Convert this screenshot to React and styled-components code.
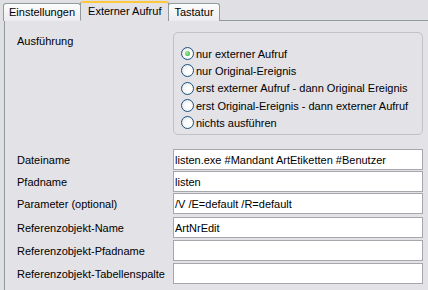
import React from 'react'
import styled, { createGlobalStyle } from 'styled-components'

const Global = createGlobalStyle`
  body {
    margin: 0;
    background: #e0dfe3;
    font-family: "Liberation Sans", Arial, sans-serif;
    font-size: 11px;
    color: #000;
    overflow: hidden;
  }
`

const Window = styled.div`
  width: 428px;
  height: 290px;
  overflow: hidden;
  background: #e0dfe3;
  padding-top: 1px;
  box-sizing: border-box;
`

const TabStrip = styled.div`
  display: flex;
  align-items: flex-end;
  padding-left: 3px;
  height: 20px;
  position: relative;
  z-index: 1;
`

const Tab = styled.div`
  height: ${p => (p.active ? '20px' : '18px')};
  padding: 0 ${p => (p.active ? '7px' : '5px')};
  margin: 0 ${p => (p.active ? '-1px' : '0')};
  box-sizing: border-box;
  border: 1px solid #919b9c;
  border-bottom: ${p => (p.active ? '1px solid #e3e2e7' : 'none')};
  border-top: ${p => (p.active ? '2px solid #ffc83c' : '1px solid #919b9c')};
  border-radius: 3px 3px 0 0;
  background: ${p => (p.active ? '#e3e2e7' : 'linear-gradient(#fdfdfd, #ecebef)')};
  display: flex;
  align-items: center;
  font-size: 11px;
  line-height: 1;
`

const Panel = styled.div`
  margin-left: 4px;
  margin-top: -1px;
  width: 440px;
  height: 280px;
  border-left: 1px solid #919b9c;
  border-top: 1px solid #919b9c;
  background: #e3e2e7;
  padding: 11px 0 0 12px;
  box-sizing: border-box;
  display: grid;
  grid-template-columns: 156px 250px;
  align-content: start;
  align-items: center;
`

const Label = styled.div`
  align-self: ${p => (p.top ? 'start' : 'center')};
  padding-top: ${p => (p.top ? '3px' : '0')};
  margin-top: ${p => p.gap || 0}px;
  font-size: 11px;
`

const Group = styled.div`
  border: 1px solid #c3c1c8;
  border-radius: 5px;
  height: 103px;
  box-sizing: border-box;
  padding: 12px 0 0 7px;
  display: flex;
  flex-direction: column;
`

const Option = styled.label`
  display: flex;
  align-items: center;
  height: 17.3px;
  gap: 2px;
  font-size: 11px;
`

const Radio = styled.span`
  width: 11px;
  height: 11px;
  border-radius: 50%;
  border: 1px solid #1c5180;
  background: radial-gradient(circle at 60% 60%, #ffffff 30%, #dcdcd7 100%);
  display: flex;
  align-items: center;
  justify-content: center;
  flex: none;
  &::after {
    content: '';
    width: 5px;
    height: 5px;
    border-radius: 50%;
    background: ${p => (p.checked ? 'radial-gradient(circle at 40% 40%, #a8f0a0, #21a121)' : 'transparent')};
  }
`

const Field = styled.div`
  height: 21px;
  margin-top: ${p => p.gap || 0}px;
  border: 1px solid #a6a6ad;
  background: #fff;
  box-sizing: border-box;
  padding-left: 1px;
  display: flex;
  align-items: center;
  font-size: 11px;
  white-space: nowrap;
`

const options = [
  'nur externer Aufruf',
  'nur Original-Ereignis',
  'erst externer Aufruf - dann Original Ereignis',
  'erst Original-Ereignis - dann externer Aufruf',
  'nichts ausführen',
]

const fields = [
  ['Dateiname', 'listen.exe #Mandant ArtEtiketten #Benutzer', 14],
  ['Pfadname', 'listen', 1],
  ['Parameter (optional)', '/V /E=default /R=default', 1],
  ['Referenzobjekt-Name', 'ArtNrEdit', 3],
  ['Referenzobjekt-Pfadname', '', 2],
  ['Referenzobjekt-Tabellenspalte', '', 2],
]

export default function App() {
  return (
    <Window>
      <Global />
      <TabStrip>
        <Tab>Einstellungen</Tab>
        <Tab active>Externer Aufruf</Tab>
        <Tab>Tastatur</Tab>
      </TabStrip>
      <Panel>
        <Label top>Ausführung</Label>
        <Group>
          {options.map((o, i) => (
            <Option key={o}>
              <Radio checked={i === 0} />
              {o}
            </Option>
          ))}
        </Group>
        {fields.map(([label, value, gap]) => (
          <React.Fragment key={label}>
            <Label gap={gap}>{label}</Label>
            <Field gap={gap}>{value}</Field>
          </React.Fragment>
        ))}
      </Panel>
    </Window>
  )
}
